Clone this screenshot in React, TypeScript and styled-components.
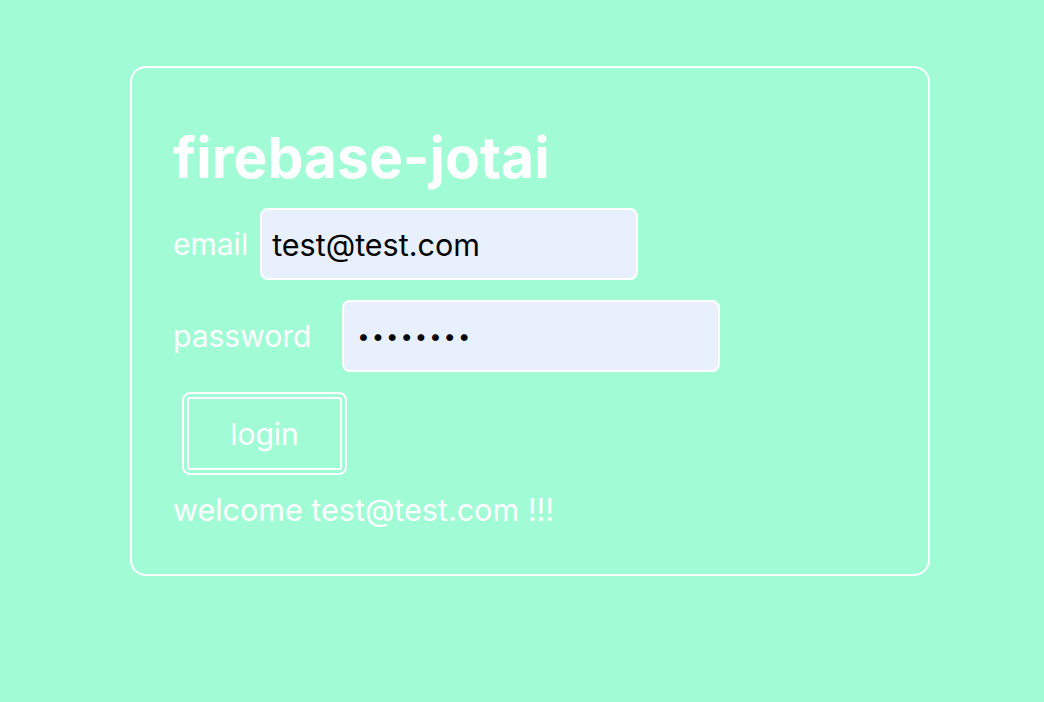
import React from "react";
import styled, { createGlobalStyle } from "styled-components";

const GlobalStyle = createGlobalStyle`
  html, body {
    margin: 0;
    padding: 0;
    background: #a1fcd6;
  }
  body {
    font-family: Inter, "Noto Sans", sans-serif;
    color: #ffffff;
  }
`;

const Page = styled.div`
  min-height: 702px;
  padding: 66px 0 0 130px;
  box-sizing: border-box;
`;

const Card = styled.div`
  width: 800px;
  box-sizing: border-box;
  border: 2px solid #ffffff;
  border-radius: 16px;
  padding: 56px 41px 46px;
  display: flex;
  flex-direction: column;
  align-items: flex-start;
`;

const Title = styled.h1`
  margin: 0 0 16px;
  font-size: 57px;
  line-height: 68px;
  font-weight: 700;
  color: #ffffff;
`;

const Row = styled.label<{ $gap: number }>`
  display: flex;
  align-items: center;
  gap: ${(p) => p.$gap}px;
  margin-bottom: 20px;
  font-size: 30px;
  line-height: 36px;
  font-weight: 400;
  color: #ffffff;
`;

const Input = styled.input`
  width: 378px;
  height: 72px;
  box-sizing: border-box;
  border: 2px solid #ffffff;
  border-radius: 8px;
  background: #e8f0fe;
  padding: 0 10px;
  font-family: Inter, "Noto Sans", sans-serif;
  font-size: 30.5px;
  color: #000000;
  outline: none;

  &[type="password"] {
    font-size: 22px;
    letter-spacing: 2px;
    padding-left: 13px;
  }
`;

const Button = styled.button`
  margin: 0 0 17px 9px;
  width: 165px;
  height: 83px;
  box-sizing: border-box;
  border: 7px double #ffffff;
  border-radius: 8px;
  background: transparent;
  font-family: Inter, "Noto Sans", sans-serif;
  font-size: 30px;
  line-height: 36px;
  color: #ffffff;
  cursor: pointer;
`;

const Welcome = styled.p`
  margin: 0;
  font-size: 30.5px;
  line-height: 36px;
  color: #ffffff;
`;

export default function App() {
  return (
    <>
      <GlobalStyle />
      <Page>
        <Card>
          <Title>firebase-jotai</Title>
          <Row $gap={12}>
            email
            <Input type="email" defaultValue="test@test.com" />
          </Row>
          <Row $gap={31}>
            password
            <Input type="password" defaultValue="password" />
          </Row>
          <Button>login</Button>
          <Welcome>welcome test@test.com !!!</Welcome>
        </Card>
      </Page>
    </>
  );
}
